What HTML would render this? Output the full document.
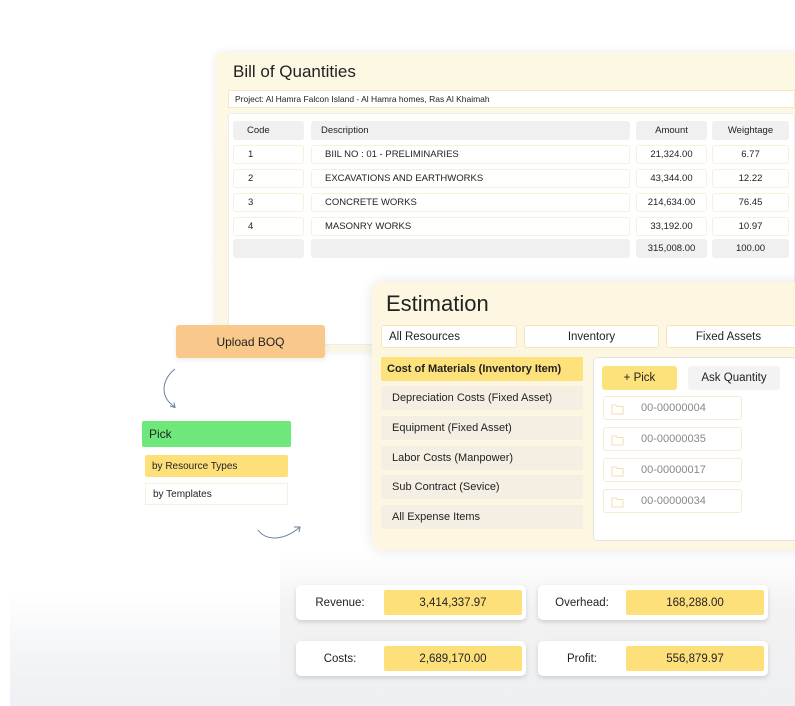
<!DOCTYPE html>
<html><head><meta charset="utf-8"><style>
*{box-sizing:border-box;margin:0;padding:0}
body{width:795px;height:706px;overflow:hidden;background:#fff;font-family:"Liberation Sans",sans-serif;color:#222;position:relative}
.a{position:absolute}
.bg{left:10px;top:590px;width:785px;height:116px;background:linear-gradient(180deg,#fff 0%,#f3f4f6 60%,#eef0f3 100%)}
.bg2{left:280px;top:550px;width:515px;height:156px;background:linear-gradient(180deg,#fff 0%,#f2f2f3 40%,#eeeff1 100%)}
.boq{left:215px;top:52px;width:600px;height:300px;background:linear-gradient(180deg,#fdf8e4,#fbf6e6);border-radius:8px;box-shadow:0 0 8px rgba(0,0,0,.08)}
.cell{position:absolute;font-size:9.5px;display:flex;align-items:center;border-radius:3px}
.h{background:#f0f0f0}
.r{background:#fff;border:1px solid #f7f0da}
.c{justify-content:center}
.est{left:372px;top:282px;width:440px;height:268px;background:#fdf7e1;border-radius:10px;box-shadow:0 0 14px rgba(0,0,0,.1)}
.tab{position:absolute;top:325px;height:23px;background:#fff;border:1px solid #f4e6b8;border-radius:3px;font-size:11.5px;display:flex;align-items:center}
.li{position:absolute;left:381px;width:202px;height:24px;background:#f4efe2;font-size:11px;display:flex;align-items:center;padding-left:11px;border-radius:2px}
.it{position:absolute;left:603px;width:139px;height:24px;background:#fff;border:1px solid #f5ecd4;border-radius:3px;font-size:11px;color:#888;display:flex;align-items:center;padding-left:37px}
.it svg{position:absolute;left:7px;top:6px}
.st{position:absolute;width:230px;height:35px;background:#fff;border-radius:5px;box-shadow:0 2px 5px rgba(0,0,0,.15);font-size:11.5px}
.st .l{position:absolute;left:0;width:88px;top:0;height:35px;display:flex;align-items:center;justify-content:center}
.st .v{position:absolute;left:88px;top:5px;width:138px;height:25px;background:#fde07a;border-radius:2px;display:flex;align-items:center;justify-content:center}
</style></head><body>
<div class="a bg"></div>
<div class="a bg2"></div>
<div class="a boq"></div>
<div class="a" style="left:233px;top:62px;font-size:17px;color:#222">Bill of Quantities</div>
<div class="a" style="left:228px;top:90px;width:567px;height:18px;background:#fff;border:1px solid #f6e9c0;font-size:8.5px;padding-left:6px;display:flex;align-items:center">Project: Al Hamra Falcon Island - Al Hamra homes, Ras Al Khaimah</div>
<div class="a" style="left:228px;top:113px;width:567px;height:232px;background:#fff;border:1px solid #ececec;border-radius:3px"></div>
<div class="cell h" style="left:233px;top:121px;width:71px;height:19px;padding-left:14px">Code</div>
<div class="cell h" style="left:311px;top:121px;width:319px;height:19px;padding-left:10px">Description</div>
<div class="cell h c" style="left:636px;top:121px;width:71px;height:19px">Amount</div>
<div class="cell h c" style="left:712px;top:121px;width:77px;height:19px">Weightage</div>

<div class="cell r" style="left:233px;top:145px;width:71px;height:19px;padding-left:14px">1</div>
<div class="cell r" style="left:311px;top:145px;width:319px;height:19px;padding-left:13px">BIIL NO : 01 - PRELIMINARIES</div>
<div class="cell r c" style="left:636px;top:145px;width:71px;height:19px">21,324.00</div>
<div class="cell r c" style="left:712px;top:145px;width:77px;height:19px">6.77</div>

<div class="cell r" style="left:233px;top:169px;width:71px;height:19px;padding-left:14px">2</div>
<div class="cell r" style="left:311px;top:169px;width:319px;height:19px;padding-left:13px">EXCAVATIONS AND EARTHWORKS</div>
<div class="cell r c" style="left:636px;top:169px;width:71px;height:19px">43,344.00</div>
<div class="cell r c" style="left:712px;top:169px;width:77px;height:19px">12.22</div>

<div class="cell r" style="left:233px;top:193px;width:71px;height:19px;padding-left:14px">3</div>
<div class="cell r" style="left:311px;top:193px;width:319px;height:19px;padding-left:13px">CONCRETE WORKS</div>
<div class="cell r c" style="left:636px;top:193px;width:71px;height:19px">214,634.00</div>
<div class="cell r c" style="left:712px;top:193px;width:77px;height:19px">76.45</div>

<div class="cell r" style="left:233px;top:217px;width:71px;height:19px;padding-left:14px">4</div>
<div class="cell r" style="left:311px;top:217px;width:319px;height:19px;padding-left:13px">MASONRY WORKS</div>
<div class="cell r c" style="left:636px;top:217px;width:71px;height:19px">33,192.00</div>
<div class="cell r c" style="left:712px;top:217px;width:77px;height:19px">10.97</div>

<div class="cell h" style="left:233px;top:239px;width:71px;height:19px"></div>
<div class="cell h" style="left:311px;top:239px;width:319px;height:19px"></div>
<div class="cell h c" style="left:636px;top:239px;width:71px;height:19px">315,008.00</div>
<div class="cell h c" style="left:712px;top:239px;width:77px;height:19px">100.00</div>

<div class="a est"></div>
<div class="a" style="left:386px;top:291px;font-size:22px;color:#222">Estimation</div>
<div class="tab" style="left:381px;width:136px;padding-left:7px">All Resources</div>
<div class="tab" style="left:524px;width:135px;justify-content:center">Inventory</div>
<div class="tab" style="left:666px;width:135px;justify-content:center;padding-right:10px">Fixed Assets</div>
<div class="li" style="top:357px;background:#fde17a;font-weight:bold;padding-left:6px">Cost of Materials (Inventory Item)</div>
<div class="li" style="top:386px">Depreciation Costs (Fixed Asset)</div>
<div class="li" style="top:416px">Equipment (Fixed Asset)</div>
<div class="li" style="top:446px">Labor Costs (Manpower)</div>
<div class="li" style="top:475px">Sub Contract (Sevice)</div>
<div class="li" style="top:505px">All Expense Items</div>
<div class="a" style="left:593px;top:357px;width:210px;height:184px;background:#fff;border:1px solid #e3e3e3;border-radius:4px"></div>
<div class="a" style="left:602px;top:366px;width:75px;height:24px;background:#fde17a;border-radius:3px;font-size:11.5px;display:flex;align-items:center;justify-content:center">+ Pick</div>
<div class="a" style="left:688px;top:366px;width:92px;height:24px;background:#f3f3f3;border-radius:3px;font-size:11.5px;display:flex;align-items:center;justify-content:center">Ask Quantity</div>
<div class="it" style="top:396px"><svg width="13" height="12"><path d="M1 2h4l1.5 1.5H12V11H1z" fill="none" stroke="#f5dcb0"/></svg>00-00000004</div>
<div class="it" style="top:427px"><svg width="13" height="12"><path d="M1 2h4l1.5 1.5H12V11H1z" fill="none" stroke="#f5dcb0"/></svg>00-00000035</div>
<div class="it" style="top:458px"><svg width="13" height="12"><path d="M1 2h4l1.5 1.5H12V11H1z" fill="none" stroke="#f5dcb0"/></svg>00-00000017</div>
<div class="it" style="top:489px"><svg width="13" height="12"><path d="M1 2h4l1.5 1.5H12V11H1z" fill="none" stroke="#f5dcb0"/></svg>00-00000034</div>

<div class="a" style="left:176px;top:325px;width:149px;height:33px;background:#f8c98a;border-radius:3px;box-shadow:0 2px 6px rgba(0,0,0,.08);font-size:12px;display:flex;align-items:center;justify-content:center">Upload BOQ</div>
<svg class="a" style="left:155px;top:366px" width="30" height="46"><path d="M20 3C8 12 3 30 20 41" fill="none" stroke="#6a7fa0" stroke-width="1"/><path d="M15 40l5 1.5-1-5" fill="none" stroke="#6a7fa0"/></svg>
<div class="a" style="left:142px;top:421px;width:149px;height:26px;background:#6ee87a;border-radius:2px;font-size:12px;display:flex;align-items:center;padding-left:7px">Pick</div>
<div class="a" style="left:145px;top:455px;width:143px;height:22px;background:#fde07a;border-radius:2px;font-size:10px;display:flex;align-items:center;padding-left:7px">by Resource Types</div>
<div class="a" style="left:145px;top:483px;width:143px;height:22px;background:#fff;border:1px solid #f7f0dc;font-size:10px;display:flex;align-items:center;padding-left:7px">by Templates</div>
<svg class="a" style="left:255px;top:522px" width="50" height="22"><path d="M3 8C12 20 30 18 45 5" fill="none" stroke="#6a7fa0"/><path d="M39 5l6 0-1 5" fill="none" stroke="#6a7fa0"/></svg>

<div class="st" style="left:296px;top:585px"><div class="l">Revenue:</div><div class="v">3,414,337.97</div></div>
<div class="st" style="left:538px;top:585px"><div class="l">Overhead:</div><div class="v">168,288.00</div></div>
<div class="st" style="left:296px;top:641px"><div class="l">Costs:</div><div class="v">2,689,170.00</div></div>
<div class="st" style="left:538px;top:641px"><div class="l">Profit:</div><div class="v">556,879.97</div></div>
</body></html>
